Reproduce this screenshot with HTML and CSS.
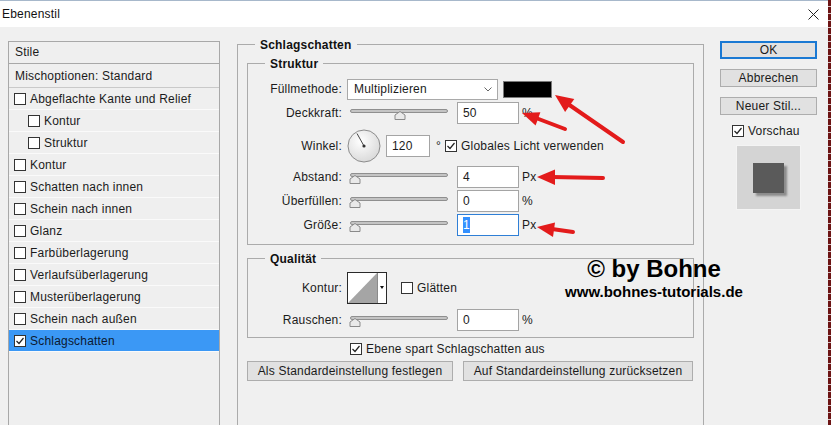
FILE: index.html
```html
<!DOCTYPE html>
<html lang="de">
<head>
    <meta charset="UTF-8">
    <title>Ebenenstil</title>
    <link rel="stylesheet" href="styles.css">
</head>
<body>
    <div class="window">
        <div class="frame">
            <div class="titlebar">
                <span class="title">Ebenenstil</span>
                <svg class="close" width="11" height="11" viewBox="0 0 11 11"><path d="M0.5 0.5 L10.5 10.5 M10.5 0.5 L0.5 10.5" stroke="#222" stroke-width="1"/></svg>
            </div>

            <div class="dialog">
                <!-- Stile list -->
                <div class="styles-list">
                    <div class="list-head">Stile</div>
                    <div class="list-row blend">Mischoptionen: Standard</div>
                    <div class="list-row"><span class="cb"></span>Abgeflachte Kante und Relief</div>
                    <div class="list-row sub"><span class="cb"></span>Kontur</div>
                    <div class="list-row sub"><span class="cb"></span>Struktur</div>
                    <div class="list-row"><span class="cb"></span>Kontur</div>
                    <div class="list-row"><span class="cb"></span>Schatten nach innen</div>
                    <div class="list-row"><span class="cb"></span>Schein nach innen</div>
                    <div class="list-row"><span class="cb"></span>Glanz</div>
                    <div class="list-row"><span class="cb"></span>Farbüberlagerung</div>
                    <div class="list-row"><span class="cb"></span>Verlaufsüberlagerung</div>
                    <div class="list-row"><span class="cb"></span>Musterüberlagerung</div>
                    <div class="list-row"><span class="cb"></span>Schein nach außen</div>
                    <div class="list-row selected"><span class="cb"><svg width="10" height="10" viewBox="0 0 10 10"><path d="M1.5 5 L4 7.5 L8.5 2" fill="none" stroke="#222" stroke-width="1.2"/></svg></span>Schlagschatten</div>
                </div>

                <!-- Schlagschatten settings -->
                <div class="group main-group">
                    <div class="group-title">Schlagschatten</div>

                    <div class="group sub-group struktur">
                        <div class="group-title">Struktur</div>

                        <div class="form-row r-mode">
                            <label>Füllmethode:</label>
                            <div class="select">
                                <span>Multiplizieren</span>
                                <svg width="8" height="5" viewBox="0 0 8 5"><path d="M0.5 0.5 L4 4 L7.5 0.5" fill="none" stroke="#666" stroke-width="1"/></svg>
                            </div>
                            <span class="swatch"></span>
                        </div>

                        <div class="form-row r-opacity">
                            <label>Deckkraft:</label>
                            <svg class="slider" width="104" height="14" viewBox="0 0 104 14">
                                <rect x="3.5" y="2.5" width="97" height="3" rx="1.5" fill="#c4c4c4" stroke="#8f8f8f"/>
                                <path d="M53 4.5 L58 8 L58 12.5 L48 12.5 L48 8 Z" fill="#e9e9e9" stroke="#8a8a8a"/>
                            </svg>
                            <span class="field wide">50</span>
                            <span class="unit">%</span>
                        </div>

                        <div class="form-row r-angle">
                            <label>Winkel:</label>
                            <svg class="dial" width="34" height="34" viewBox="0 0 34 34">
                                <defs>
                                    <radialGradient id="dialFill" cx="0.4" cy="0.35" r="0.7">
                                        <stop offset="0" stop-color="#ffffff"/>
                                        <stop offset="1" stop-color="#d8d8d8"/>
                                    </radialGradient>
                                </defs>
                                <circle cx="17" cy="17" r="16" fill="url(#dialFill)" stroke="#8c8c8c"/>
                                <line x1="17" y1="17" x2="10" y2="4.5" stroke="#444" stroke-width="1"/>
                                <circle cx="17" cy="17" r="1.6" fill="#333"/>
                            </svg>
                            <span class="field short">120</span>
                            <span class="degree">°</span>
                            <span class="cb"><svg width="10" height="10" viewBox="0 0 10 10"><path d="M1.5 5 L4 7.5 L8.5 2" fill="none" stroke="#222" stroke-width="1.2"/></svg></span>
                            <span class="cb-label">Globales Licht verwenden</span>
                        </div>

                        <div class="form-row r-distance">
                            <label>Abstand:</label>
                            <svg class="slider" width="104" height="14" viewBox="0 0 104 14">
                                <rect x="3.5" y="2.5" width="97" height="3" rx="1.5" fill="#c4c4c4" stroke="#8f8f8f"/>
                                <path d="M8 4.5 L13 8 L13 12.5 L3 12.5 L3 8 Z" fill="#e9e9e9" stroke="#8a8a8a"/>
                            </svg>
                            <span class="field wide">4</span>
                            <span class="unit">Px</span>
                        </div>

                        <div class="form-row r-spread">
                            <label>Überfüllen:</label>
                            <svg class="slider" width="104" height="14" viewBox="0 0 104 14">
                                <rect x="3.5" y="2.5" width="97" height="3" rx="1.5" fill="#c4c4c4" stroke="#8f8f8f"/>
                                <path d="M8 4.5 L13 8 L13 12.5 L3 12.5 L3 8 Z" fill="#e9e9e9" stroke="#8a8a8a"/>
                            </svg>
                            <span class="field wide">0</span>
                            <span class="unit">%</span>
                        </div>

                        <div class="form-row r-size">
                            <label>Größe:</label>
                            <svg class="slider" width="104" height="14" viewBox="0 0 104 14">
                                <rect x="3.5" y="2.5" width="97" height="3" rx="1.5" fill="#c4c4c4" stroke="#8f8f8f"/>
                                <path d="M8 4.5 L13 8 L13 12.5 L3 12.5 L3 8 Z" fill="#e9e9e9" stroke="#8a8a8a"/>
                            </svg>
                            <span class="field wide focused"><span class="sel">1</span></span>
                            <span class="unit">Px</span>
                        </div>
                    </div>

                    <div class="group sub-group qualitaet">
                        <div class="group-title">Qualität</div>

                        <div class="form-row r-contour">
                            <label>Kontur:</label>
                            <svg class="contour" width="40" height="32" viewBox="0 0 40 32">
                                <rect x="0.5" y="0.5" width="39" height="31" fill="#fff" stroke="#2a2a2a"/>
                                <polygon points="1,31 30,1 30,31" fill="#a5a5a5"/>
                                <line x1="30.5" y1="1" x2="30.5" y2="31" stroke="#8a8a8a"/>
                                <polygon points="33,14 37,14 35,17" fill="#111"/>
                            </svg>
                            <span class="cb smooth"></span>
                            <span class="cb-label">Glätten</span>
                        </div>

                        <div class="form-row r-noise">
                            <label>Rauschen:</label>
                            <svg class="slider" width="104" height="14" viewBox="0 0 104 14">
                                <rect x="3.5" y="2.5" width="97" height="3" rx="1.5" fill="#c4c4c4" stroke="#8f8f8f"/>
                                <path d="M8 4.5 L13 8 L13 12.5 L3 12.5 L3 8 Z" fill="#e9e9e9" stroke="#8a8a8a"/>
                            </svg>
                            <span class="field wide">0</span>
                            <span class="unit">%</span>
                        </div>
                    </div>

                    <div class="knockout">
                        <span class="cb"><svg width="10" height="10" viewBox="0 0 10 10"><path d="M1.5 5 L4 7.5 L8.5 2" fill="none" stroke="#222" stroke-width="1.2"/></svg></span>
                        <span class="cb-label">Ebene spart Schlagschatten aus</span>
                    </div>

                    <div class="defaults">
                        <button class="btn make-default">Als Standardeinstellung festlegen</button>
                        <button class="btn reset-default">Auf Standardeinstellung zurücksetzen</button>
                    </div>
                </div>

                <!-- OK / Abbrechen column -->
                <div class="side">
                    <button class="btn side-btn ok">OK</button>
                    <button class="btn side-btn">Abbrechen</button>
                    <button class="btn side-btn">Neuer Stil...</button>
                    <div class="preview-toggle">
                        <span class="cb"><svg width="10" height="10" viewBox="0 0 10 10"><path d="M1.5 5 L4 7.5 L8.5 2" fill="none" stroke="#222" stroke-width="1.2"/></svg></span>
                        <span class="cb-label">Vorschau</span>
                    </div>
                    <div class="preview"><div class="preview-square"></div></div>
                </div>
            </div>
        </div>
        <div class="edge"></div>
    </div>

    <!-- tutorial annotations on top of the screenshot -->
    <div class="watermark">
        <div class="wm-name">© by Bohne</div>
        <div class="wm-url">www.bohnes-tutorials.de</div>
    </div>

    <svg class="arrows" width="831" height="425" viewBox="0 0 831 425">
        <g stroke="#e31b1b" stroke-width="4" stroke-linecap="round" fill="#e31b1b">
            <line x1="623" y1="142" x2="568" y2="104"/>
            <line x1="565" y1="129" x2="536" y2="118"/>
            <line x1="603" y1="178" x2="552" y2="177"/>
            <line x1="573" y1="232" x2="552" y2="229"/>
        </g>
        <g fill="#e31b1b">
            <polygon points="555,95 574.3,98.9 565.1,111.9"/>
            <polygon points="522,113 540.4,112.2 535.6,125.4"/>
            <polygon points="537,177 555,169.5 555,185"/>
            <polygon points="537,227 555,222.5 553,237"/>
        </g>
    </svg>
</body>
</html>
```

FILE: styles.css
```css
* {
    box-sizing: border-box;
}

body {
    margin: 0;
    width: 831px;
    height: 425px;
    overflow: hidden;
    position: relative;
    background: #f0f0f0;
    color: #1b1b1b;
    font-family: "Liberation Sans", Arial, sans-serif;
    font-size: 12px;
    letter-spacing: 0.2px;
}

.window {
    display: flex;
    height: 425px;
}

.frame {
    flex: 1;
    display: flex;
    flex-direction: column;
    border-top: 1px solid #a7b8cb;
}

.titlebar {
    height: 26px;
    background: #fff;
    display: flex;
    align-items: center;
    justify-content: space-between;
    padding: 0 9px 0 2px;
}

.title {
    color: #111;
}

.edge {
    width: 3px;
    background: repeating-linear-gradient(to bottom, #6c1414 0 6px, #d8c4c4 6px 7px);
}

.dialog {
    flex: 1;
    display: flex;
    align-items: flex-start;
    padding: 14px 0 0 8px;
    background: #f0f0f0;
    overflow: hidden;
}

/* list of styles */
.styles-list {
    width: 212px;
    height: 400px;
    flex-shrink: 0;
    border: 1px solid #a8a8a8;
    background: #efefef;
}

.list-head {
    height: 22px;
    line-height: 20px;
    padding-left: 6px;
    border-bottom: 1px solid #a8a8a8;
}

.list-row {
    height: 22px;
    display: flex;
    align-items: center;
    gap: 4px;
    padding-left: 5px;
    border-bottom: 1px solid #fafafa;
}

.list-row.blend {
    height: 24px;
    padding-left: 6px;
    border-bottom: 1px solid #c9c9c9;
}

.list-row.sub {
    padding-left: 19px;
}

.list-row.selected {
    background: #3b98f5;
    color: #0c1830;
}

.cb {
    width: 12px;
    height: 12px;
    flex-shrink: 0;
    border: 1px solid #333;
    background: #fff;
    display: flex;
    align-items: center;
    justify-content: center;
}

.cb svg {
    display: block;
}

/* group boxes */
.group {
    border: 1px solid #ababab;
    display: flex;
    flex-direction: column;
}

.group-title {
    align-self: flex-start;
    margin: -8px 0 0 17px;
    padding: 0 5px;
    line-height: 16px;
    background: #f0f0f0;
    font-weight: bold;
    color: #111;
}

.main-group {
    width: 467px;
    height: 400px;
    margin: 3px 0 0 17px;
    flex-shrink: 0;
    border-bottom: none;
}

.sub-group {
    margin: 0 9px;
}

.struktur {
    margin-top: 10px;
    padding-bottom: 8px;
}

.qualitaet {
    margin-top: 13px;
    padding-bottom: 6px;
}

.form-row {
    display: flex;
    align-items: center;
    height: 22px;
}

.form-row label {
    width: 94px;
    text-align: right;
    margin-right: 5px;
    flex-shrink: 0;
}

.r-mode { margin-top: 6px; }
.r-opacity { margin-top: 1px; height: 24px; }
.r-angle { margin-top: 5px; height: 32px; }
.r-distance { margin-top: 4px; }
.r-spread { margin-top: 2px; }
.r-size { margin-top: 2px; }
.r-contour { margin-top: 5px; height: 32px; }
.r-noise { margin-top: 5px; }

.select {
    width: 151px;
    height: 21px;
    background: #fff;
    border: 1px solid #a9a9a9;
    display: flex;
    align-items: center;
    justify-content: space-between;
    padding: 0 5px 0 6px;
}

.swatch {
    width: 49px;
    height: 17px;
    margin-left: 5px;
    background: #000;
    border: 1px solid #7a7a7a;
}

.slider {
    display: block;
    flex-shrink: 0;
    margin-top: 2px;
}

.field {
    height: 22px;
    background: #fff;
    border: 1px solid #a4a4a4;
    line-height: 20px;
    padding-left: 5px;
}

.field.wide {
    width: 62px;
    margin-left: 6px;
}

.field.short {
    width: 44px;
    margin-left: 5px;
}

.field.focused {
    border-color: #2f7fd6;
}

.sel {
    background: #3390ff;
    color: #fff;
    padding: 1px 0;
}

.unit {
    margin-left: 3px;
}

.dial {
    display: block;
    flex-shrink: 0;
}

.degree {
    margin-left: 6px;
    margin-right: 4px;
}

.cb-label {
    margin-left: 4px;
}

.contour {
    display: block;
    flex-shrink: 0;
}

.cb.smooth {
    margin-left: 14px;
}

.knockout {
    display: flex;
    align-items: center;
    height: 20px;
    margin: 1px 0 0 112px;
}

.defaults {
    display: flex;
    gap: 10px;
    margin: 2px 0 0 9px;
}

.btn {
    height: 20px;
    padding: 0;
    background: #e1e1e1;
    border: 1px solid #adadad;
    font-family: "Liberation Sans", Arial, sans-serif;
    font-size: 12px;
    letter-spacing: 0.2px;
    color: #1b1b1b;
}

.make-default {
    width: 206px;
}

.reset-default {
    width: 230px;
}

/* right column */
.side {
    width: 97px;
    margin-left: 16px;
    display: flex;
    flex-direction: column;
    gap: 10px;
}

.side-btn {
    width: 97px;
    height: 18px;
    line-height: 16px;
}

.side-btn.ok {
    border: 2px solid #1a79d3;
    line-height: 14px;
}

.preview-toggle {
    display: flex;
    align-items: center;
    height: 18px;
    margin: -3px 0 0 12px;
}

.preview {
    width: 65px;
    height: 65px;
    margin: -5px 0 0 16px;
    background: #d4d4d4;
    border: 1px solid #f4f4f4;
    padding: 17px 0 0 16px;
}

.preview-square {
    width: 31px;
    height: 30px;
    background: #5a5a5a;
    box-shadow: 3px 3px 2px #8c8c8c;
}

/* annotations */
.watermark {
    position: absolute;
    left: 554px;
    top: 255px;
    width: 200px;
    text-align: center;
    font-family: "Liberation Sans", Arial, sans-serif;
    font-weight: bold;
    letter-spacing: 0;
    color: #000;
}

.wm-name {
    font-size: 24px;
    line-height: 28px;
}

.wm-url {
    font-size: 15px;
    line-height: 18px;
}

.arrows {
    position: absolute;
    left: 0;
    top: 0;
    pointer-events: none;
}
```
